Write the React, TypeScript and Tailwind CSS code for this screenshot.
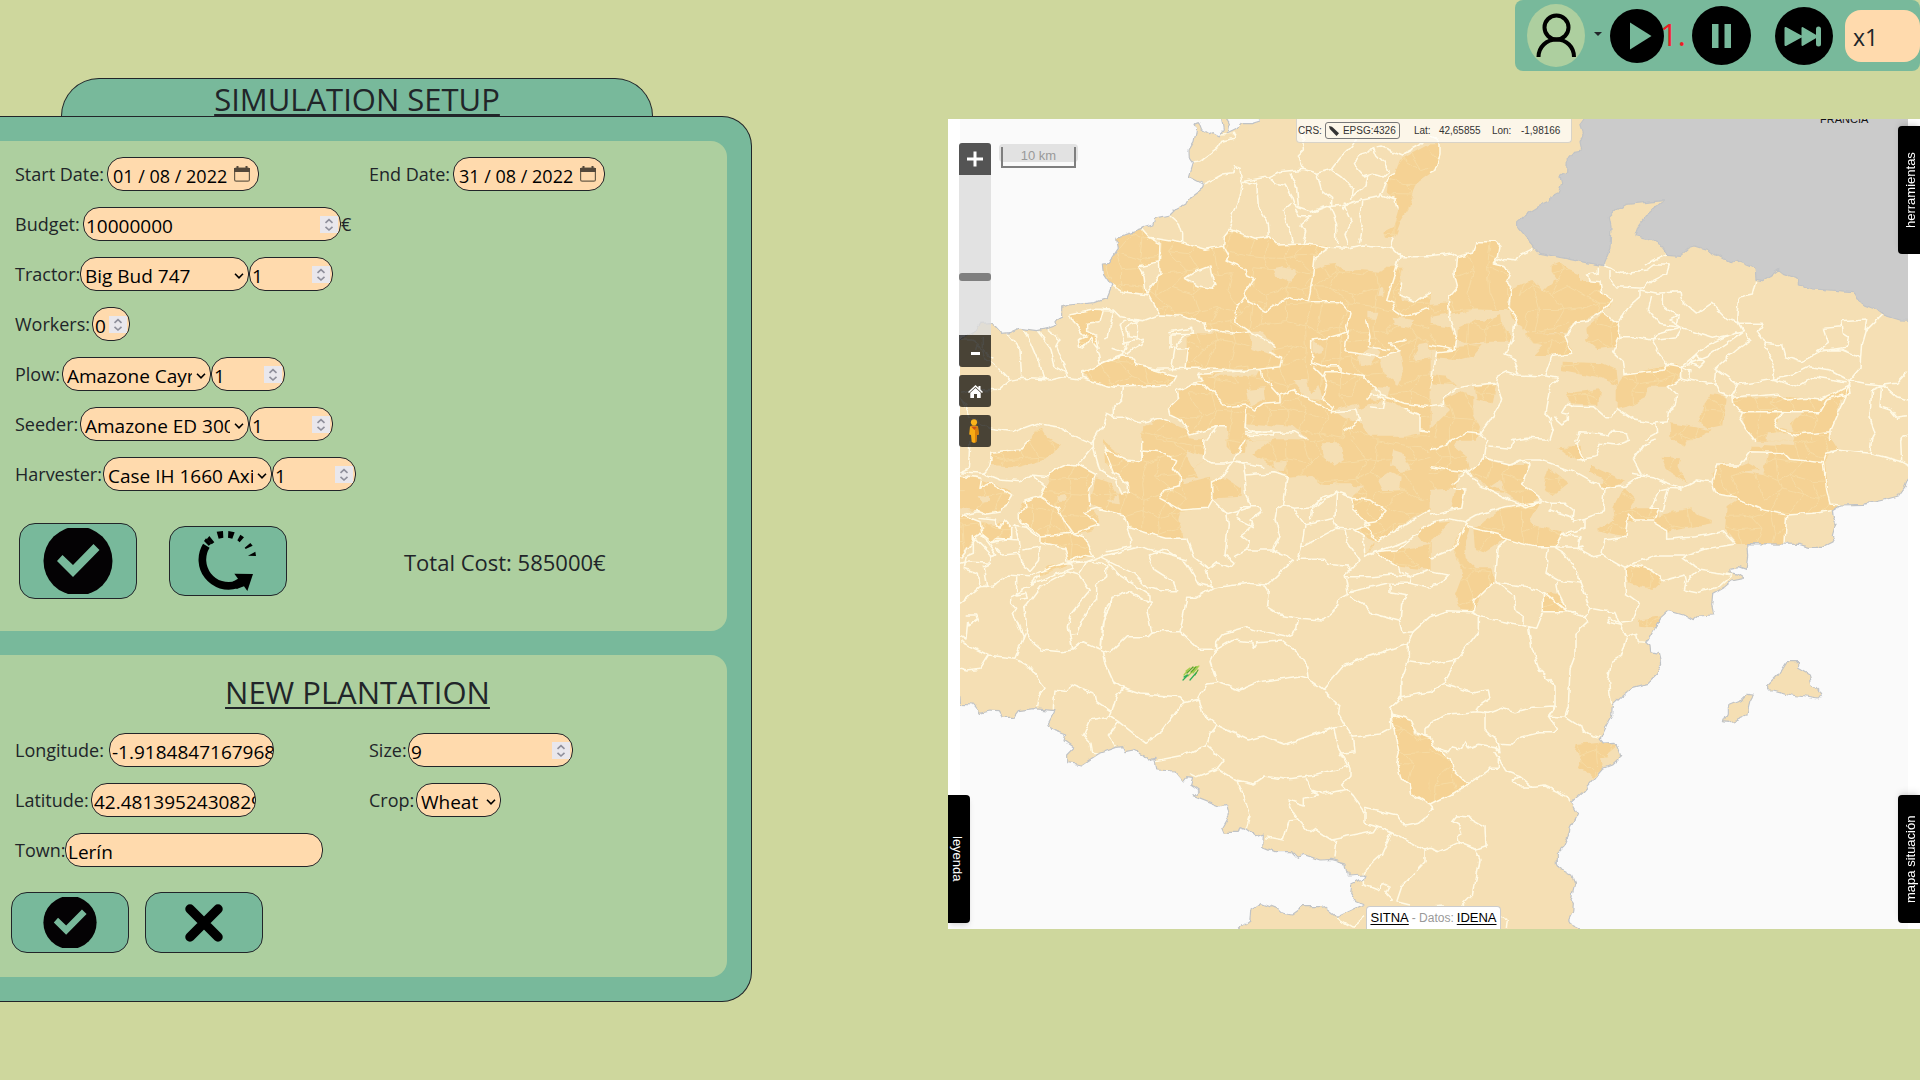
import { useId, type ReactNode } from "react";

/* ---------- map drawing data: tiles of 3x-scaled coordinates ---------- */

type Tile = { x: number; y: number; h: number; dark: string[]; patches: string[]; lines: string[] };

const TILES: Tile[] = [
  {
    x: 940, y: 110, h: 990,
    dark: [
      "530,383 600,358 625,382 660,400 658,455 595,468 612,500 618,550 545,545 515,525 490,490 487,462 505,460 535,415",
      "660,388 740,400 795,418 848,408 850,380 868,358 945,385 985,378 1015,405 1095,402 1165,405 1125,440 1120,480 1160,465 1190,462 1218,485 1255,480 1320,485 1340,470 1385,470 1380,520 1385,570 1420,575 1472,545 1472,992 1440,992 1400,992 865,992 860,950 830,950 750,975 730,935 690,915 685,895 720,865 712,845 755,825 790,815 780,790 960,778 740,775 740,680 760,670 890,672 800,660 795,640 740,620 655,610 625,555 660,490",
      "388,612 455,598 490,598 480,635 440,640 440,665 470,680 477,715 455,685 430,715 415,710 415,690 440,680 400,640",
      "425,790 490,760 550,738 580,745 590,765 710,798 695,825 520,832 460,815",
      "610,950 660,925 685,935 740,960 750,985 785,992 605,992",
      "270,992 285,960 305,955 320,980 340,992",
      "1472,100 1380,150 1365,190 1345,200 1340,250 1370,275 1375,300 1360,350 1330,365 1335,380 1365,382 1385,330 1405,300 1430,220 1472,190",
    ],
    patches: [
      "735,505 765,485 810,468 815,500 825,520 815,535 780,528 750,520",
      "1385,520 1390,490 1410,480 1430,450 1472,440 1472,545 1420,575 1385,560",
      "1000,478 1030,472 1065,478 1075,495 1050,515 1010,500",
      "935,665 965,665 1010,710 985,735 932,715",
      "1255,740 1300,705 1320,725 1290,765 1260,768",
      "1320,740 1380,725 1392,790 1375,825 1330,790",
      "1420,735 1440,705 1472,700 1472,745 1425,752",
      "920,840 970,835 975,865 930,890",
      "1250,900 1300,880 1340,870 1400,900 1440,915 1440,970 1390,980 1290,980 1260,940",
      "1135,825 1150,870 1098,868 1060,810 1100,810 1110,850",
      "1180,900 1255,880 1258,935 1215,925",
      "912,940 1060,950 1100,985 1060,992 940,992 915,975",
      "1120,690 1148,715 1145,730 1120,735",
      "1355,620 1425,630 1415,655 1360,645",
      "1285,605 1315,605 1310,628 1285,625",
      "1320,530 1330,535 1330,560 1315,560",
      "800,800 860,785 960,780 950,800 830,800",
      "1300,830 1350,835 1340,870 1290,865",
    ],
    lines: [
      "755,160 780,155 830,118 845,95 880,85 885,70 840,72",
      "790,222 820,208 850,192 875,188 880,170 900,175 905,215 985,200 1020,185 1090,178 1130,190 1175,178 1200,145 1235,110 1250,85",
      "908,218 900,260 880,310 868,355",
      "950,218 955,290 985,340 988,378",
      "910,215 930,222 950,215",
      "985,200 1010,220 1035,225 1055,260 1065,290 1110,305 1160,290 1215,285 1250,272 1320,260 1345,200 1365,190",
      "1090,178 1075,135 1090,120 1088,60",
      "1050,190 1070,230 1075,290",
      "1130,190 1145,240 1175,265 1175,285 1110,310",
      "1055,280 1030,300 1040,345 1055,370 1060,400",
      "1065,295 1080,320 1110,320 1080,345 1100,365 1090,400",
      "1175,180 1205,200 1240,235 1235,270",
      "1240,155 1260,135 1280,130 1300,110 1310,135 1330,155 1345,185 1330,198 1300,190 1270,198 1245,170 1240,155",
      "1310,110 1320,108 1385,135 1440,105 1450,95",
      "1235,265 1275,225 1280,200 1300,190",
      "1170,290 1190,340 1190,405",
      "1215,285 1235,330 1215,370 1225,405",
      "1265,275 1260,320 1270,345 1258,400",
      "1210,275 1222,285 1210,298 1210,275",
      "1325,255 1365,270 1372,295",
      "1360,385 1350,410 1380,440 1470,440",
      "690,318 715,340 725,370 725,398",
      "605,358 625,382 725,398 795,418 848,408 850,380 868,358 945,385 988,378 1015,405 1095,402 1150,408 1170,412 1220,415 1270,405 1350,412",
      "625,382 660,400 658,455 660,490 620,550",
      "595,468 658,455",
      "515,525 545,545 625,555 655,610",
      "595,468 612,500 618,550",
      "848,408 865,440 855,450 915,475 920,495 942,505 915,550 925,575 980,605 990,595 1050,560 1105,575 1200,575 1230,610 1220,650 1225,665 1155,685 1115,690",
      "1165,412 1125,440 1118,500 1105,575",
      "735,505 765,485 810,468 815,500 825,520 815,535 780,528 735,505",
      "915,560 885,600 888,635 930,665 1010,710",
      "460,598 520,600 540,620 610,632 655,615 720,618 795,640 800,660 890,670 935,665",
      "520,600 505,680 490,690",
      "388,612 455,598 490,598 480,635 440,640 440,665 470,680 477,715 455,685 430,715 415,710 412,690 440,680 400,640 388,612",
      "540,640 560,630 600,632 560,650 565,680 595,685 590,640",
      "540,640 555,700 610,685 600,705 560,730 515,715",
      "470,715 480,760 550,735 565,700",
      "425,805 425,790 490,760 550,738 580,745 590,765 710,798 695,825 520,832 460,815 425,805",
      "585,765 650,778 740,775 830,775 900,785 1020,770 1025,745 985,730",
      "685,665 755,655 758,670 690,672 690,715 705,715 695,775",
      "740,672 710,700 712,718 745,715 738,775",
      "200,670 240,720 245,800",
      "250,660 275,700 300,760 310,808",
      "290,660 330,710 345,770 380,790 385,800",
      "320,655 360,690 350,710 385,800",
      "60,690 95,690 115,700 135,745 180,780 210,812 245,805 330,810 370,800 425,808",
      "130,680 130,720 160,745",
      "60,850 110,840 180,838 210,812",
      "550,833 545,870 520,895 520,920 500,910 490,940 455,1000",
      "520,922 555,922 600,938 660,925 690,935",
      "685,895 715,865 712,840 760,820 785,815 775,790 870,785 960,778",
      "685,895 690,915 730,935 750,975 830,950 860,950",
      "755,822 800,830 860,890 920,885 940,900 970,880 1020,875 1020,860 965,800 960,780",
      "830,952 800,992",
      "60,860 90,920 150,955 220,965 290,940 350,950 420,985 455,1000",
      "115,700 110,720",
      "1115,690 1115,760 1150,770 1200,770 1200,785 1155,785 1150,800 1120,770",
      "1150,800 1160,825 1150,870 1180,890 1170,910",
      "1200,785 1270,800 1310,835 1320,855 1390,880 1470,890",
      "1225,660 1215,725 1250,730 1320,740 1380,725 1350,700 1400,690",
      "1280,630 1290,680 1285,710 1350,720",
      "1380,440 1340,572 1365,580 1355,600 1385,620 1470,595",
      "1385,520 1380,555 1425,575 1470,545",
      "1020,855 1060,840 1110,870 1150,890 1175,905 1250,900 1260,930 1215,965",
      "920,890 915,955 945,970 1060,965 1105,990",
      "915,968 995,965 1000,978 915,975",
      "1390,895 1440,915 1440,960 1470,965",
      "1280,870 1300,850 1335,870 1330,895 1290,890",
    ],
  },
  {
    x: 1430, y: 110, h: 990,
    dark: [
      "-2,100 30,100 30,135 15,180 -2,190",
      "80,440 130,430 140,395 195,395 210,410 205,440 190,462 225,470 240,490 228,515 245,530 240,560 230,575 240,600 120,600 60,615 55,560 85,530 75,490",
      "245,535 290,515 310,510 340,545 370,515 385,510 365,480 365,465 385,455 410,475 450,490 450,512 510,515 515,545 550,572 540,590 485,620 430,640 410,665 300,670 255,640 240,600",
      "470,650 520,610 560,645 570,680 560,710 500,718 465,690",
      "285,670 400,670 430,725 415,735 310,735 340,705 310,700",
      "160,635 210,612 215,650 240,670 240,695 180,695 120,705 80,690 80,660 140,630",
      "-2,640 60,650 80,690 75,715 -2,720",
      "-2,585 55,580 60,610 -2,622",
      "395,755 515,760 560,780 565,825 500,800 395,780",
      "585,795 650,780 740,762 755,775 750,800 715,830 655,830 650,860 600,885 560,895 560,830",
      "410,850 510,838 505,885 420,880",
      "845,852 890,860 880,945 835,955 805,940 820,890",
      "722,940 845,960 790,990 745,992 725,990",
      "908,865 1065,860 1170,870 1215,850 1255,828 1260,850 1230,870 1200,965 1190,992 975,992 940,950 940,905 910,890",
      "40,870 90,845 130,860 130,910 150,950 140,992 -2,992 -2,960 60,900",
      "-2,795 50,800 75,825 -2,820",
      "20,715 155,705 130,735 75,750 20,745",
      "135,830 195,822 185,880 140,870",
    ],
    patches: ["1050,905 1120,905 1080,940 1090,965 1040,950", "1010,970 1095,970 1090,992 1010,992", "410,690 465,640 475,690 410,700"],
    lines: [
      "0,80 30,95 30,135 15,180 0,188",
      "0,440 65,432 80,440 130,430 140,395 195,395 210,410 205,440 190,462 225,470 240,490 228,515 245,530 235,590 260,620 245,690 225,735 250,745 265,795",
      "190,462 215,445 260,450 270,435 310,415",
      "80,440 75,490 85,530 55,565 60,630 80,690 75,720 0,705",
      "518,467 545,475 570,490 650,480 670,465 718,465 710,490 660,515 640,535 560,530 540,505 540,480",
      "505,470 505,490 475,495 480,512 510,515 515,545 550,572 515,605 560,640 580,615 600,585 630,560 630,540 680,550 750,545 755,570 800,610 845,580 890,625 925,640",
      "715,433 660,455 645,465",
      "700,550 700,590 740,620 720,630 755,650 740,640 745,615",
      "665,560 655,600 690,640 755,650 680,670 665,690 740,680 755,655",
      "755,655 850,685 940,665 920,630 925,565 970,555 980,512",
      "940,665 890,700 830,740 755,770 830,705 920,665",
      "925,640 1000,640 985,665 1005,700 1055,705 1065,740 1115,755 1180,720 1240,720 1290,740",
      "945,670 960,690 920,720 855,775 925,825 1030,808 1090,795 1140,770 1200,780 1255,810 1305,820 1360,825 1400,820 1432,785",
      "1000,700 1035,770 1030,808 1100,830 1150,800 1250,815",
      "925,825 905,860 910,890 940,905 1060,905 1170,905 1190,870 1240,855 1260,850 1255,820",
      "905,862 1040,850 1070,870 1130,865 1170,870 1215,850 1255,828",
      "1180,655 1235,650 1235,635 1310,630 1305,665 1355,615",
      "1180,655 1195,700 1160,725 1250,712 1255,680 1240,670 1235,635",
      "1305,665 1295,700 1292,740 1290,775 1260,810 1240,870 1200,960 1200,990",
      "1360,825 1325,840 1320,920 1335,970 1320,992",
      "1355,825 1350,890 1380,900 1400,925 1434,920",
      "1360,825 1400,860 1434,870",
      "1434,975 1415,985 1412,992",
      "515,605 480,630 440,635 405,680 425,730 365,740 345,795",
      "560,640 570,680 548,725 580,755 585,795 700,780 712,762 755,770 755,805 830,820 855,820 860,775",
      "570,680 620,680 665,690 690,735 712,762",
      "755,805 715,830 740,855 735,890 715,905 710,935 670,940 610,930 560,895 545,920 525,920 490,890 430,888 410,880 395,905 415,910 415,930 395,942 370,920",
      "855,820 870,850 905,862",
      "780,760 800,735 820,755 805,770 780,760",
      "760,770 780,780 775,812",
      "0,835 20,725 75,720",
      "200,800 230,785 265,795 345,798 385,805 360,830 345,910 360,925 370,960 360,992",
      "200,800 195,820 135,825 75,835 40,865 40,885 0,890",
      "200,820 215,870 180,930 150,970 165,992",
      "940,905 930,930 950,960 975,992",
      "1060,905 1035,930 1050,960 1100,975 1200,965",
      "150,970 110,965 60,992",
      "440,992 450,965 500,968 535,975 545,963 590,968 595,988",
      "640,992 680,970 678,940",
      "240,992 290,985 355,988",
    ],
  },
  {
    x: 940, y: 440, h: 720,
    dark: [
      "58,105 130,120 205,150 215,165 185,215 140,222 110,210 58,205",
      "58,222 120,245 125,280 95,300 58,355",
      "125,250 165,255 190,240 215,265 215,295 150,305 120,280",
      "150,75 160,40 240,35 270,-2 320,-2 360,20 310,60 240,80",
      "340,90 380,72 415,75 470,105 445,150 450,200 480,245 460,270 400,285 430,290 460,345 390,365 375,320 300,310 300,285 260,255 235,240 235,220 255,180 300,170 320,130",
      "490,-2 510,20 560,60 605,60 605,-2 795,-2 790,60 760,90 775,110 725,115 735,130 810,110 815,175 800,205 720,215 715,240 730,290 680,295 560,262 550,225 485,210 450,190 470,115 510,130 530,165 565,160 570,140 540,110 495,70",
      "815,120 860,115 905,145 905,170 820,175",
      "860,-2 920,-2 915,35 880,40 860,20",
      "940,40 1000,-2 1472,-2 1472,210 1420,230 1310,310 1275,345 1270,290 1245,270 1290,255 1240,210 1235,170 1270,140 1210,135 1150,135 1110,105 1045,110 1010,90",
      "300,395 325,378 385,370 360,385 300,405",
      "1300,340 1472,315 1472,390 1380,380",
      "1440,260 1472,255 1472,315 1430,290",
    ],
    patches: [
      "1145,10 1200,10 1215,60 1180,80 1150,40",
      "1360,30 1390,40 1412,90 1380,95 1350,80",
      "1315,120 1350,95 1385,110 1380,150 1330,150",
      "500,185 535,165 540,190",
      "115,170 150,168 150,182 125,185",
      "1000,65 1040,62 1035,95 1005,90",
      "1180,130 1240,130 1235,165 1190,155",
      "1240,265 1310,310 1420,260 1472,210 1472,250 1330,330 1300,330 1300,310 1275,345",
      "350,170 375,165 380,185 355,185",
      "740,30 790,50 790,60 760,90 740,50",
    ],
    lines: [
      "90,0 85,85 60,95 130,100 180,120 240,125 270,105 330,110 340,90 380,72 415,75 460,20 460,0",
      "150,75 155,40 240,30 270,0",
      "150,75 130,100",
      "60,105 125,115 120,145 150,130 215,165 185,215 140,222 115,212 60,225",
      "60,222 120,245 125,280 110,290 60,355",
      "115,235 165,240 180,265 190,240 215,265 215,295 150,305 120,280",
      "275,105 315,140 300,170 255,182 258,205 235,220 235,240 260,255 300,285 300,310 375,325 385,365 430,345 460,350 430,290 400,280 480,255 435,215 470,205 550,225 560,262 680,295 740,295",
      "300,170 355,205 375,245 400,280 300,288",
      "215,255 260,262 295,290",
      "415,75 470,105 445,150 450,200",
      "460,20 480,90 530,120 545,165 565,160 565,135 520,95 490,20",
      "490,25 560,60 605,65 610,30 660,35 710,60 700,85 725,115 720,140 675,150 660,175 725,210 800,205 815,178 860,220 865,250 855,345 885,370 880,380 830,365 805,385 760,350 740,295",
      "605,60 605,0",
      "795,0 790,55 815,72 850,72 880,65 910,75 915,105 920,170 935,200 890,215 860,225",
      "880,65 840,115 815,125 815,180",
      "915,0 895,40 880,65 950,75 970,80",
      "890,230 905,200 960,200 965,215 930,240 940,260 890,235",
      "935,245 925,270 905,285 925,300 920,330 885,350",
      "920,330 1000,330 1060,358 980,435",
      "915,105 1000,98 1045,110 1030,195 1010,205 1005,240 1020,290 1000,330",
      "1030,195 1060,205 1120,200 1150,170 1190,155 1235,172 1240,210 1290,255 1245,270",
      "1060,205 1095,255 1085,320 1075,355",
      "1095,255 1160,240 1180,235 1190,265 1085,320",
      "1110,240 1115,210 1190,150 1185,230",
      "1190,265 1240,268 1270,290 1275,345",
      "1215,270 1220,300 1260,360 1230,390 1220,375 1160,370 1150,358 1070,358",
      "1230,390 1215,405 1225,460 1190,480 1185,510 1150,540 1075,535 1020,525 980,500 985,450 975,435",
      "1275,350 1300,335 1375,380 1380,395 1410,410 1470,390",
      "1235,175 1290,180 1335,215 1310,245 1275,250 1310,305 1420,240 1470,210",
      "1300,335 1370,330 1470,250",
      "1275,345 1340,325 1400,300",
      "1215,410 1290,410 1360,405 1415,412 1410,430 1345,430 1230,455",
      "1350,430 1350,455 1405,465 1385,490 1380,540 1390,578 1420,575",
      "1230,470 1270,490 1290,520 1385,545",
      "1410,430 1470,445",
      "60,370 75,365 150,370 155,345 100,290 100,340 75,350 70,385 115,400 120,435 140,440 130,380 155,370",
      "125,290 140,305 170,345 155,350",
      "150,305 170,295 235,300 240,340 190,345 165,320",
      "240,340 245,365 270,395 295,365 300,320 250,330",
      "235,300 220,250",
      "60,490 120,440 160,438 200,405 270,410 300,395 370,370 440,365 480,350 600,320 740,360",
      "300,405 270,435 250,450 215,470 215,490 230,505 220,520 250,590 225,655 145,645 60,605",
      "230,410 230,465 260,460 265,475 240,478",
      "385,365 400,385 325,410 270,435",
      "250,595 260,570 255,500 300,440 385,395 420,405 450,450 395,520 385,560 398,630 365,635 305,630 275,605 255,570",
      "420,400 440,365 500,375 500,410 470,435 470,480 435,520 410,580 390,583",
      "480,625 490,540 520,475 570,455 615,485 640,490 620,510 635,575",
      "480,625 485,560 500,500 520,475",
      "480,350 580,400 620,440 660,452 710,452 700,425 645,390 625,345 675,328 740,370 775,430 815,440 800,390",
      "500,365 530,400 630,465 630,485",
      "560,262 575,300 575,320 500,335",
      "815,445 925,430 980,435",
      "820,445 770,475 740,475 720,575",
      "398,630 430,605 490,632 510,638 560,590 625,590 640,575 720,575 775,628 830,628 830,605 850,580 920,560 960,575 1035,590 1070,570 1075,540",
      "830,628 880,600 935,605 940,622 950,605 1025,600 1075,640 1100,680 1105,715",
      "828,628 810,665 830,725 900,750 960,725 1080,708 1105,715 1150,748 1215,672 1405,610 1420,575 1470,530",
      "1405,610 1405,665 1470,675",
      "1405,665 1385,720 1385,780",
      "145,645 120,685 80,690 60,685",
      "225,655 260,675 315,745 295,770 290,802",
      "490,632 500,680 520,725 550,745 600,762 720,770 735,785",
      "830,728 800,732 775,780",
      "80,525 110,525 115,540 85,560 80,545 75,600 60,590",
    ],
  },
  {
    x: 1430, y: 440, h: 720,
    dark: [
      "-2,-2 80,-2 75,20 110,50 120,85 85,105 80,145 -2,150",
      "115,90 165,60 240,75 300,75 275,130 330,170 290,200 220,155 180,150 160,130",
      "345,120 355,85 415,130 370,165 340,150",
      "75,150 105,150 95,205 65,205",
      "150,255 220,200 330,185 300,240 310,255 395,275 375,320 320,320 215,300 190,320 160,340 135,330 130,265",
      "100,250 120,260 105,300 110,360 135,385 185,385 190,420 150,470 130,515 95,515 75,465 100,400 70,325",
      "-2,250 60,245 20,290 -2,305",
      "340,458 385,465 412,515 340,515",
      "480,75 585,125 550,145 505,140 520,115 480,95",
      "550,200 580,140 615,180 600,205 680,205 685,240 620,240 590,245 590,290 500,270 555,240",
      "585,385 610,375 680,400 695,425 670,450 595,430",
      "695,50 750,55 745,85 770,130 710,90",
      "670,245 700,220 785,205 800,225 845,240 845,250 710,275",
      "845,100 880,70 930,80 955,70 965,20 1205,20 1185,70 1200,195 1230,195 1205,215 1070,225 1065,312 920,312 885,270 890,200 920,180 860,165",
      "1090,-2 1205,-2 1225,30 1000,25 1000,12 1090,18",
      "620,540 700,528 680,560 640,562 625,560",
      "725,-2 770,-2 760,20",
      "385,25 455,20 460,60 420,50",
    ],
    patches: ["930,95 1000,105 1015,35 965,35 955,70 990,90", "180,140 210,120 220,150"],
    lines: [
      "0,80 60,90 115,95 160,60 165,20 175,0",
      "175,18 240,25 250,0",
      "165,55 240,72 290,60 330,60 345,65 430,95 520,145 590,135 635,105 670,110 700,125 755,145 800,120 845,125 860,75 930,75 960,35 1060,38 1080,58 1180,68 1190,40 1220,30",
      "240,72 270,60 300,75 275,130 330,170 330,185 290,200 240,180 180,150 150,140 115,95 65,135",
      "330,175 365,190 360,210 425,230 430,245 465,235 520,215 525,145",
      "365,190 405,190 430,210 425,240",
      "70,145 105,150 95,205 50,212 0,225",
      "0,250 50,235 105,245 140,225 225,200 330,185",
      "105,245 110,260 215,285 230,298 310,320 375,320 445,322 450,290 395,285 375,320",
      "395,285 465,265 465,235",
      "230,298 205,320 195,425 250,465 255,515 280,530 278,555",
      "0,355 75,325 105,245",
      "190,425 135,480 130,515 50,512 0,530",
      "195,425 290,440 340,458 412,515 340,515 320,565 245,550 150,530 130,515",
      "340,458 340,515",
      "355,325 345,400 380,420 450,430 445,400 405,340 375,322",
      "380,425 385,460 412,515 465,530 480,505 450,430",
      "460,320 445,325 490,350 515,345 585,385 590,465 625,490 605,545 575,550",
      "515,345 525,300 585,292 595,225 615,240 670,240 685,205 660,205 690,150 715,145 700,210 685,215",
      "715,145 755,148",
      "670,245 710,270 710,298 800,290 880,275 915,312 820,328 770,345 680,345 610,370 585,385",
      "610,375 660,388 700,422 765,405 770,425 810,390 908,405 870,440 800,458 760,450 765,425",
      "770,340 760,355 810,390",
      "605,100 635,105 610,60 640,15 680,0",
      "845,125 860,165 920,175 1000,210 1070,225 1150,220 1205,212",
      "1070,225 1065,312",
      "1180,68 1190,150 1200,192 1235,195",
      "1220,30 1320,40 1325,0",
      "1320,40 1415,65 1434,75",
      "1415,65 1412,0",
      "445,60 460,55 440,15 450,0",
      "450,60 495,50 510,10 560,15 600,0",
      "480,505 555,518 570,555 530,545 540,535 570,550 590,590 620,580 625,605 650,607",
      "465,530 470,548 435,580 435,650 420,690 415,800 405,830",
      "295,560 305,620 330,695 375,735 375,800 355,830",
      "590,590 570,650 545,665 535,720 545,800",
      "145,530 145,575 80,660 40,730 0,755",
      "0,672 80,660",
      "40,730 130,758 175,750 180,775 145,800",
      "0,395 55,405 30,432 0,438",
      "0,30 50,15 60,0",
    ],
  },
  {
    x: 940, y: 680, h: 770,
    dark: ["1352,105 1410,120 1425,165 1472,175 1472,375 1415,340 1410,315 1385,300 1370,250 1378,220"],
    patches: [],
    lines: [
      "340,88 345,30 380,35 390,12 465,40 470,65 515,95 510,108 450,120 430,170 450,190 455,220 475,222",
      "515,95 530,45 550,25",
      "510,108 535,125 615,187 665,155 730,68 775,58 785,100 830,135 925,180 970,168 1035,193 1185,140 1215,135 1195,100 1200,75 1150,35",
      "535,125 505,165 530,200",
      "830,135 810,160 800,195 735,225 645,242",
      "800,195 852,240 832,265 770,290 750,280",
      "832,265 890,300 930,405 918,445",
      "890,300 940,312 975,288 1035,298 1130,285 1225,262",
      "1185,140 1195,205 1230,262 1230,285 1205,315 1240,350 1275,400",
      "1215,135 1240,170 1245,215 1200,220 1220,260",
      "1240,172 1320,162 1352,145 1352,80 1385,50 1385,0",
      "1352,105 1378,220 1370,250 1385,300 1410,315 1415,340 1470,375",
      "1352,105 1410,120 1430,160 1470,175",
      "1385,50 1470,35",
      "1455,170 1455,150 1470,130",
      "1095,295 1115,330 1150,342 1220,328",
      "1115,330 1135,348 1090,355 1090,375 1045,360 1045,375 1075,420 1048,422 1030,480 975,470",
      "1075,420 1110,458 1125,448 1175,480 1190,485 1185,535",
      "1175,480 1300,455 1310,440 1275,430 1275,382 1370,405 1395,438 1435,430 1470,402",
      "1310,440 1355,458 1455,510 1455,545 1385,620 1370,665 1410,675",
      "1355,458 1325,525 1270,575 1270,610 1320,630 1330,610 1350,620 1340,640 1360,660 1350,665",
      "1185,712 1235,742 1275,710",
      "1455,510 1470,505",
    ],
  },
  {
    x: 1430, y: 680, h: 770,
    dark: [
      "-2,175 15,200 60,235 70,270 115,315 60,345 -2,375",
      "440,195 510,188 560,195 530,220 540,228 510,235 520,265 490,290 470,270 445,265 455,240 435,215",
    ],
    patches: [],
    lines: [
      "0,130 50,102 140,95 175,100 215,85 255,95 310,82 375,78 355,108 380,145 370,155 325,155 270,168 250,192 205,190 165,150 165,100",
      "140,95 145,80",
      "355,108 405,112 490,168 508,172",
      "0,172 15,200 55,215 65,200 95,208 105,188 115,205 145,193 195,200 210,215 205,190",
      "15,200 60,235 70,270 115,315 60,345 0,375",
      "115,315 180,265 205,265 205,230 195,215 230,275 270,290 250,300 270,320 310,322 345,318 415,350 420,368",
      "270,290 310,322",
      "0,505 25,515 85,488 80,470 95,460 85,435 68,425 80,410 120,415 165,440 168,500 140,510 85,488",
      "135,505 150,540 130,640 95,675",
      "215,708 235,720 232,747",
      "0,375 8,385 0,395",
      "0,678 45,675",
    ],
  },
];

const pathOf = (pts: string, close = false) => "M" + pts.trim().split(" ").join("L") + (close ? "Z" : "");

const noise = (i: number, j: number) => {
  const v = Math.sin(i * 127.1 + j * 311.7) * 43758.5453;
  return (v - Math.floor(v) - 0.5) * 40;
};

/* Irregular mesh of parcel limits drawn inside the wooded municipalities. */
const parcelMesh = (() => {
  const step = 54;
  const node = (i: number, j: number) =>
    `${Math.round(i * step + (j % 2) * 24 + noise(i, j))},${Math.round(j * step + noise(j + 50, i))}`;
  let d = "";
  for (let j = 0; j < 20; j++) {
    for (let i = 0; i < 29; i++) {
      if (noise(i + 9, j + 3) > -12) d += `M${node(i, j)}L${node(i + 1, j)}`;
      if (noise(i + 21, j + 7) > -12) d += `M${node(i, j)}L${node(i, j + 1)}`;
    }
  }
  return d;
})();

const NW_SEA =
  "20,0 965,0 960,30 935,38 905,38 890,55 862,68 865,50 870,40 860,26 845,26 850,60 838,78 820,68 805,74 785,62 775,35 762,40 770,55 762,95 747,120 748,145 760,160 748,200 790,222 788,235 748,265 740,280 710,295 690,315 645,325 638,345 605,355 560,370 530,383 535,415 505,460 487,462 490,490 515,528 500,565 465,578 385,585 365,592 365,615 348,635 350,645 320,655 290,662 240,655 210,668 185,670 165,648 150,638 120,640 102,665 60,690 20,700";
const FRANCE =
  "470,0 465,27 452,45 460,70 450,95 455,120 430,125 412,145 410,185 390,200 395,220 385,248 360,260 358,275 325,290 280,318 260,335 260,350 328,430 518,467 540,415 543,350 538,322 560,300 590,283 700,272 650,315 625,350 615,380 660,390 700,412 715,433 752,436 780,412 795,408 830,418 900,458 915,450 975,475 978,508 998,512 1045,478 1060,490 1105,507 1105,525 1150,537 1270,545 1290,580 1330,595 1355,613 1410,630 1460,632 1460,0";
const EAST_SEA =
  "1480,110 1434,118 1425,140 1405,168 1360,180 1300,193 1235,195 1207,212 1210,235 1218,250 1207,290 1213,305 1180,322 1135,322 1105,313 950,311 953,350 948,388 925,380 900,385 900,398 925,403 943,415 905,423 885,440 848,462 845,495 851,522 810,525 790,542 760,525 715,512 695,530 660,590 650,607 660,615 662,635 688,640 695,670 680,705 655,730 610,742 570,775 547,797 545,825 528,855 508,898 520,912 555,910 562,922 572,950 545,975 520,985 460,1055 422,1088 440,1120 420,1160 418,1180 400,1220 382,1238 382,1270 395,1290 425,1305 435,1330 423,1380 430,1390 428,1415 416,1440 425,1455 450,1467 480,1500 1480,1500";
const SW_SEA =
  "20,50 60,50 62,73 100,75 118,97 150,90 178,92 190,112 220,112 235,92 280,86 345,92 325,130 335,148 380,165 375,182 402,202 380,225 380,248 425,255 475,222 530,202 548,200 555,215 580,210 610,225 625,240 645,235 650,270 705,273 730,303 740,290 758,292 752,312 778,330 762,347 840,378 860,373 868,405 848,440 855,457 895,457 900,440 915,445 950,470 970,462 968,500 1005,515 1055,515 1075,535 1090,523 1140,540 1175,538 1218,550 1225,588 1275,585 1270,597 1235,615 1232,640 1245,660 1275,672 1190,712 1145,677 1090,677 1055,702 1020,695 1010,685 965,668 932,690 930,720 895,747 880,800 20,800";

const place = (x: number, y: number) => `translate(${x} ${y}) scale(0.33333)`;

function MapDrawing() {
  return (
    <svg viewBox="960 119 948 810" className="block w-full" role="img" aria-label="Mapa">
      <defs>
        <filter id="wiggle" x="0" y="0" width="1" height="1" colorInterpolationFilters="sRGB">
          <feTurbulence type="fractalNoise" baseFrequency="0.1" numOctaves="2" seed="4" />
          <feDisplacementMap in="SourceGraphic" scale="6" xChannelSelector="R" yChannelSelector="G" />
        </filter>
        {TILES.map((t, n) => (
          <clipPath id={`tile${n}`} key={n}>
            <path d={t.dark.map((p) => pathOf(p, true)).join("")} />
          </clipPath>
        ))}
      </defs>
      <g filter="url(#wiggle)">
        <rect x="940" y="100" width="990" height="850" fill="#f5dfb4" />
        {TILES.map((t, n) => (
          <g key={n} transform={place(t.x, t.y)}>
            <path d={t.dark.map((p) => pathOf(p, true)).join("")} fill="#f5d294" />
            <g clipPath={`url(#tile${n})`}>
              <path d={parcelMesh} fill="none" stroke="#f6dba4" strokeWidth="3" />
            </g>
            <path d={t.patches.map((p) => pathOf(p, true)).join("")} fill="#f5dfb4" />
          </g>
        ))}
        {TILES.map((t, n) => (
          <path
            key={n}
            transform={place(t.x, t.y)}
            d={t.lines.map((p) => pathOf(p)).join("")}
            fill="none"
            stroke="#fffae6"
            strokeWidth="4.6"
            strokeLinejoin="round"
          />
        ))}
        <g stroke="#c0c3c6" strokeWidth="3.5" strokeLinejoin="round">
          <path transform={place(940, 110)} d={pathOf(NW_SEA, true)} fill="#fafafa" />
          <path transform={place(1430, 110)} d={pathOf(FRANCE, true)} fill="#cbcbcb" />
          <path transform={place(1430, 440)} d={pathOf(EAST_SEA, true)} fill="#fafafa" />
          <path transform={place(940, 680)} d={pathOf(SW_SEA, true)} fill="#fafafa" />
          <path
            transform={place(1430, 440)}
            fill="#f5dfb4"
            d="M1070,665L1103,665L1103,685L1138,705L1145,730L1178,760L1165,777L1085,765L1030,750L1010,750L1010,740L1045,705Z"
          />
          <path
            transform={place(1430, 680)}
            fill="#f5dfb4"
            d="M955,40L973,42L960,65L950,105L900,127L880,125L892,100L892,78L935,60Z"
          />
        </g>
      </g>
      <g fill="none" strokeWidth="1.2" strokeLinecap="round">
        <path stroke="#a5cf4c" d="M1184 675l5-6M1188 676l7-7M1193 673l5-6M1186 671l4-3M1193 668l6-2" />
        <path stroke="#5da52e" d="M1187 673l6-6M1191 672l5-5M1195 675l3-5" />
        <path stroke="#2fae57" d="M1183 680l5-5M1190 680l6-7M1184 677l3-2" />
      </g>
      <text x="1820" y="123" fontSize="11" fill="#111" fontFamily="'Liberation Sans', sans-serif">
        FRANCIA
      </text>
    </svg>
  );
}

/* ---------- form controls ---------- */

const FIELD = "h-[34px] rounded-[16px] border border-[#212529] bg-[#ffdaad] text-black";

function Row({ children }: { children: ReactNode }) {
  return <div className="flex h-[34px] items-center">{children}</div>;
}

function Stepper() {
  return (
    <span className="mr-[2px] flex h-[17px] w-[18px] shrink-0 items-center justify-center bg-[#e9e7ec]" aria-hidden="true">
      <svg viewBox="0 0 18 17" className="h-[17px] w-[18px]" fill="none" stroke="#8f8f9b" strokeWidth="1.6">
        <path d="M5.5 6.8L9 3.6l3.5 3.2M5.5 10.8L9 14l3.5-3.2" />
      </svg>
    </span>
  );
}

function Label({ htmlFor, width, children }: { htmlFor: string; width: string; children: ReactNode }) {
  return (
    <label htmlFor={htmlFor} className={`shrink-0 whitespace-nowrap text-[18px] leading-6 ${width}`}>
      {children}
    </label>
  );
}

function TextField({ id, value, width, label, stepper }: { id: string; value: string; width: string; label?: string; stepper?: boolean }) {
  return (
    <span className={`flex shrink-0 items-center overflow-hidden ${FIELD} ${width}`}>
      <input
        id={id}
        aria-label={label}
        defaultValue={value}
        inputMode={stepper ? "numeric" : "text"}
        className="h-full w-full min-w-0 bg-transparent pl-[2px] pt-1 text-[19px] outline-none"
      />
      {stepper && <Stepper />}
    </span>
  );
}

function DateField({ id, value }: { id: string; value: string }) {
  return (
    <span className={`flex w-[152px] shrink-0 items-center overflow-hidden ${FIELD}`}>
      <input id={id} defaultValue={value} className="h-full w-full min-w-0 bg-transparent pl-[5px] pt-1 text-[18px] outline-none" />
      <button type="button" aria-label="Open calendar" className="mr-2 shrink-0">
        <svg viewBox="0 0 16 16" className="h-4 w-4">
          <rect x="0.6" y="2.2" width="14.8" height="13" rx="1.5" fill="none" stroke="#6b5d48" strokeWidth="1.2" />
          <path d="M0 2h16v4H0zM2.5 0h2v2h-2zM11.5 0h2v2h-2z" fill="#54483a" />
        </svg>
      </button>
    </span>
  );
}

function SelectField({ id, value, width }: { id: string; value: string; width: string }) {
  return (
    <span className={`relative shrink-0 overflow-hidden ${FIELD} ${width}`}>
      <select id={id} className="h-full w-full appearance-none bg-transparent pl-1 pr-[18px] pt-1 text-[19px] outline-none">
        <option>{value}</option>
      </select>
      <svg viewBox="0 0 10 6" className="pointer-events-none absolute right-1 top-[15px] h-[6px] w-[10px]" fill="none" stroke="#000" strokeWidth="1.6">
        <path d="M1 0.8l4 4 4-4" />
      </svg>
    </span>
  );
}

function CheckIcon({ className }: { className: string }) {
  const id = useId();
  return (
    <svg viewBox="0 0 70 68" className={className}>
      <clipPath id={id}>
        <rect y="1" width="70" height="66" />
      </clipPath>
      <circle cx="35" cy="34" r="34.5" fill="#040204" clipPath={`url(#${id})`} />
      <path d="M14 34l5.500-6 10.500 10L50.500 17l6 6L30 50z" fill="#78b99b" />
    </svg>
  );
}

const PAD_BUTTON = "flex w-[118px] items-center justify-center rounded-[16px] border border-[#212529] bg-[#78b99b]";

function SetupCard() {
  return (
    <div className="flex h-[490px] flex-col gap-4 rounded-r-[16px] bg-[#adcf9f] pl-[15px] pt-4">
      <div className="flex">
        <div className="w-[354px]">
          <Row>
            <Label htmlFor="start" width="w-[92px]">Start Date:</Label>
            <DateField id="start" value="01 / 08 / 2022" />
          </Row>
        </div>
        <Row>
          <Label htmlFor="end" width="w-[84px]">End Date:</Label>
          <DateField id="end" value="31 / 08 / 2022" />
        </Row>
      </div>
      <Row>
        <Label htmlFor="budget" width="w-[68px]">Budget:</Label>
        <TextField id="budget" value="10000000" width="w-[258px]" stepper />
        <span className="text-[18px]">€</span>
      </Row>
      <Row>
        <Label htmlFor="tractor" width="w-[65px]">Tractor:</Label>
        <SelectField id="tractor" value="Big Bud 747" width="w-[169px]" />
        <TextField id="tractor-n" label="Tractor units" value="1" width="w-[84px]" stepper />
      </Row>
      <Row>
        <Label htmlFor="workers" width="w-[77px]">Workers:</Label>
        <TextField id="workers" value="0" width="w-[38px]" stepper />
      </Row>
      <Row>
        <Label htmlFor="plow" width="w-[47px]">Plow:</Label>
        <SelectField id="plow" value="Amazone Cayros" width="w-[149px]" />
        <TextField id="plow-n" label="Plow units" value="1" width="w-[74px]" stepper />
      </Row>
      <Row>
        <Label htmlFor="seeder" width="w-[65px]">Seeder:</Label>
        <SelectField id="seeder" value="Amazone ED 3000" width="w-[169px]" />
        <TextField id="seeder-n" label="Seeder units" value="1" width="w-[84px]" stepper />
      </Row>
      <Row>
        <Label htmlFor="harvester" width="w-[88px]">Harvester:</Label>
        <SelectField id="harvester" value="Case IH 1660 Axial" width="w-[169px]" />
        <TextField id="harvester-n" label="Harvester units" value="1" width="w-[84px]" stepper />
      </Row>
      <div className="mt-4 flex items-center pl-1">
        <button type="button" aria-label="Accept setup" className={`h-[76px] ${PAD_BUTTON}`}>
          <CheckIcon className="h-[68px] w-[70px]" />
        </button>
        <button type="button" aria-label="Reset setup" className={`ml-8 h-[70px] ${PAD_BUTTON}`}>
          <svg viewBox="0 0 180 180" className="mr-1 h-[60px] w-[60px]">
            <path d="M31 44A79 79 0 0 0 122 161" fill="none" stroke="#000" strokeWidth="23" />
            <path d="M115 128l56 1-17 51-10-14-22 8-12-22 16-9z" />
            <path d="M40 15L55 34 47 40 32 25zM62 2l19-2 1 20-14 3zM97 0l19 4-7 19-13-3zM133 11l11 8-13 15-7-6zM163 36l7 8-21 10-3-4zM178 62l2 13-24-1z" />
            <path d="M30 22l16 16-8 6-14-14z" />
          </svg>
        </button>
        <p className="ml-[117px] pt-[2px] text-[22px]">Total Cost: 585000€</p>
      </div>
    </div>
  );
}

function PlantationCard() {
  return (
    <div className="h-[322px] rounded-r-[16px] bg-[#adcf9f] pl-[15px] pt-[17px]">
      <h2 className="mr-[27px] text-center text-[31px] leading-10 underline decoration-2 underline-offset-[3px]">NEW PLANTATION</h2>
      <div className="mt-[21px] flex">
        <div className="flex w-[354px] flex-col gap-4">
          <Row>
            <Label htmlFor="lon" width="w-[94px]">Longitude:</Label>
            <TextField id="lon" value="-1.918484716796875" width="w-[165px]" />
          </Row>
          <Row>
            <Label htmlFor="lat" width="w-[76px]">Latitude:</Label>
            <TextField id="lat" value="42.48139524308291" width="w-[165px]" />
          </Row>
          <Row>
            <Label htmlFor="town" width="w-[50px]">Town:</Label>
            <TextField id="town" value="Lerín" width="w-[258px]" />
          </Row>
        </div>
        <div className="flex flex-col gap-4">
          <Row>
            <Label htmlFor="size" width="w-[39px]">Size:</Label>
            <TextField id="size" value="9" width="w-[165px]" stepper />
          </Row>
          <Row>
            <Label htmlFor="crop" width="w-[47px]">Crop:</Label>
            <SelectField id="crop" value="Wheat" width="w-[85px]" />
          </Row>
        </div>
      </div>
      <div className="-ml-1 mt-[25px] flex gap-4">
        <button type="button" aria-label="Accept plantation" className={`h-[61px] ${PAD_BUTTON}`}>
          <CheckIcon className="h-[53px] w-[54px]" />
        </button>
        <button type="button" aria-label="Discard plantation" className={`h-[61px] ${PAD_BUTTON}`}>
          <svg viewBox="0 0 38 38" className="h-[38px] w-[38px]">
            <path d="M5 5l28 28M33 5L5 33" stroke="#000" strokeWidth="9.500" strokeLinecap="round" />
          </svg>
        </button>
      </div>
    </div>
  );
}

/* ---------- top bar ---------- */

function TopBar() {
  return (
    <header className="flex justify-end">
      <nav className="flex h-[71px] w-[405px] items-center rounded-lg bg-[#78b99b] pl-3">
        <button type="button" aria-label="Account" className="flex items-center">
          <svg viewBox="0 0 58 63" className="h-[63px] w-[58px]">
            <ellipse cx="29" cy="31.500" rx="29" ry="31.500" fill="#adcf9f" />
            <g fill="none" stroke="#000" strokeWidth="4">
              <circle cx="29.500" cy="23.500" r="12" />
              <path d="M11.500 53c0-10 8-17.500 18-17.500s17.500 7.500 17.500 17.500" />
            </g>
          </svg>
          <svg viewBox="0 0 8 4" className="-mt-1 ml-[9px] h-1 w-2">
            <path d="M0 0h8L4 4z" fill="#212529" />
          </svg>
        </button>
        <div className="relative ml-2">
          <button type="button" aria-label="Play" className="block">
            <svg viewBox="0 0 54 54" className="h-[54px] w-[54px]">
              <circle cx="27" cy="27" r="27" />
              <path d="M20 13.500v27L41.500 27z" fill="#78b99b" />
            </svg>
          </button>
          <span className="absolute left-[50px] top-[5px] text-[31px] leading-10 text-[#ee1c25]">1.</span>
        </div>
        <button type="button" aria-label="Pause" className="ml-7">
          <svg viewBox="0 0 59 59" className="h-[59px] w-[59px]">
            <circle cx="29.500" cy="29.500" r="29.500" />
            <path d="M20 18h6.500v24H20zM32.500 18H39v24h-6.500z" fill="#78b99b" />
          </svg>
        </button>
        <button type="button" aria-label="Fast forward" className="ml-6">
          <svg viewBox="0 0 58 58" className="h-[58px] w-[58px]">
            <circle cx="29" cy="29" r="29" />
            <g fill="#78b99b" stroke="#78b99b" strokeWidth="2" strokeLinejoin="round">
              <path d="M10.500 21v17L26 29.500zM27.500 21v17L42 29.500z" />
              <path d="M43.500 22v15" strokeWidth="5" strokeLinecap="round" />
            </g>
          </svg>
        </button>
        <select aria-label="Speed" className="ml-3 h-[52px] w-[75px] appearance-none rounded-[16px] bg-[#ffdaad] pl-2 pt-1 text-[23px] text-[#212529]">
          <option>x1</option>
        </select>
      </nav>
    </header>
  );
}

/* ---------- map viewer ---------- */

const SIDE_TAB = "absolute flex h-32 w-[22px] items-center justify-center bg-black pr-1 text-[13px] text-white shadow-md [writing-mode:vertical-rl]";
const MAP_BUTTON = "flex h-8 w-8 items-center justify-center text-white";

function MapViewer() {
  return (
    <section className="relative mt-12 self-start overflow-hidden bg-white px-3 font-['Liberation_Sans',sans-serif]">
      <MapDrawing />

      <div className="absolute left-[11px] top-6 w-8">
        <button type="button" aria-label="Zoom in" className={`${MAP_BUTTON} rounded-t-[3px] bg-[#545454]`}>
          <svg viewBox="0 0 16 16" className="h-4 w-4" stroke="#fff" strokeWidth="3">
            <path d="M8 0.500v15M0 8h16" />
          </svg>
        </button>
        <div className="flex h-40 flex-col bg-[#dcdcdc]/80 pt-[98px]">
          <div className="h-2 rounded-[3px] bg-[#7f7f7f]" />
        </div>
        <button type="button" aria-label="Zoom out" className={`${MAP_BUTTON} rounded-b-[3px] bg-black/70`}>
          <span className="mt-1 h-[3px] w-[9px] bg-white" />
        </button>
        <button type="button" aria-label="Home" className={`${MAP_BUTTON} mt-2 rounded-[3px] bg-black/70`}>
          <svg viewBox="0 0 15 13" className="h-[13px] w-[15px]" fill="#fff">
            <path d="M7.500 0L0 7l1 1 6.500-6L14 8l1-1-2.500-2.400V1h-2v1.700z" />
            <path d="M2.300 7.800L7.500 3l5.200 4.800V13H9V9H6v4H2.300z" />
          </svg>
        </button>
        <button type="button" aria-label="Street view" className={`${MAP_BUTTON} mt-2 rounded-[3px] bg-black/70`}>
          <svg viewBox="0 0 12 24" className="mr-[2px] h-6 w-3">
            <path d="M2 7.500C3 6 9 6 10 7.500l.8 8-1.800.5-.7 7-2.300 1-2.300-1-.7-7-1.800-.5z" fill="#f8ab14" />
            <path d="M7 8h3l.8 7.500-1.800.5-.7 7-1.300.6z" fill="#d9800c" />
            <path d="M3 7.500h6L6.500 11z" fill="#c9501c" />
            <circle cx="6" cy="3.300" r="3.100" fill="#fbb41c" />
          </svg>
        </button>
      </div>

      <div className="absolute left-[51px] top-[25px] h-[18px] w-[79px] rounded bg-[#e2e2e2] px-[2px] pt-[3px]">
        <div className="h-[21px] border-2 border-t-0 border-[#7f7f7f] text-center text-[13px] leading-[18px] text-[#999]">10 km</div>
      </div>

      <div className="absolute left-[348px] top-0 flex h-6 w-[276px] items-center whitespace-nowrap rounded-b border border-t-0 border-[#d8d3c8] bg-white/70 pl-px text-[10px] text-[#333]">
        CRS:
        <button type="button" className="ml-[3px] flex h-[17px] w-[75px] items-center rounded-[3px] border border-[#777] pl-[3px]">
          <svg viewBox="0 0 10 10" className="mr-1 h-[10px] w-[10px]" fill="#333">
            <path d="M0 0l3 .7 7 6.600-2.500 2.700L.8 3z" />
          </svg>
          EPSG:4326
        </button>
        <span className="ml-[14px] w-[25px]">Lat:</span>
        <span className="w-[53px]">42,65855</span>
        <span className="w-[29px]">Lon:</span>
        <span>-1,98166</span>
      </div>

      <div className="absolute bottom-0 left-[418px] flex h-[23px] w-[135px] items-center justify-center gap-[3px] whitespace-nowrap rounded-t border border-b-0 border-[#ccc] bg-white text-[12px] text-[#999]">
        <a href="#sitna" className="text-[13px] text-black underline underline-offset-2">SITNA</a>
        <span>- Datos:</span>
        <a href="#idena" className="text-[13px] text-black underline underline-offset-2">IDENA</a>
      </div>

      <button type="button" className={`${SIDE_TAB} bottom-[6px] left-0 rounded-r`}>leyenda</button>
      <button type="button" className={`${SIDE_TAB} right-0 top-[7px] rotate-180 rounded-r`}>herramientas</button>
      <button type="button" className={`${SIDE_TAB} bottom-[6px] right-0 rotate-180 rounded-r`}>mapa situación</button>
    </section>
  );
}

export default function App() {
  return (
    <div className="min-h-screen bg-[#ced79d] font-['Open_Sans','Noto_Sans',sans-serif] text-[#212529]">
      <TopBar />
      <main className="grid grid-cols-[752fr_196fr_972fr]">
        <section className="pt-[7px]">
          <div className="ml-[61px] mr-[99px] h-[38px] rounded-t-[40px] border border-b-0 border-[#212529] bg-[#78b99b] text-center">
            <h1 className="text-[31px] leading-10 underline decoration-2 underline-offset-[3px]">SIMULATION SETUP</h1>
          </div>
          <div className="flex flex-col gap-6 rounded-r-[30px] border border-l-0 border-[#212529] bg-[#78b99b] pb-6 pr-6 pt-6">
            <SetupCard />
            <PlantationCard />
          </div>
        </section>
        <div />
        <MapViewer />
      </main>
    </div>
  );
}
